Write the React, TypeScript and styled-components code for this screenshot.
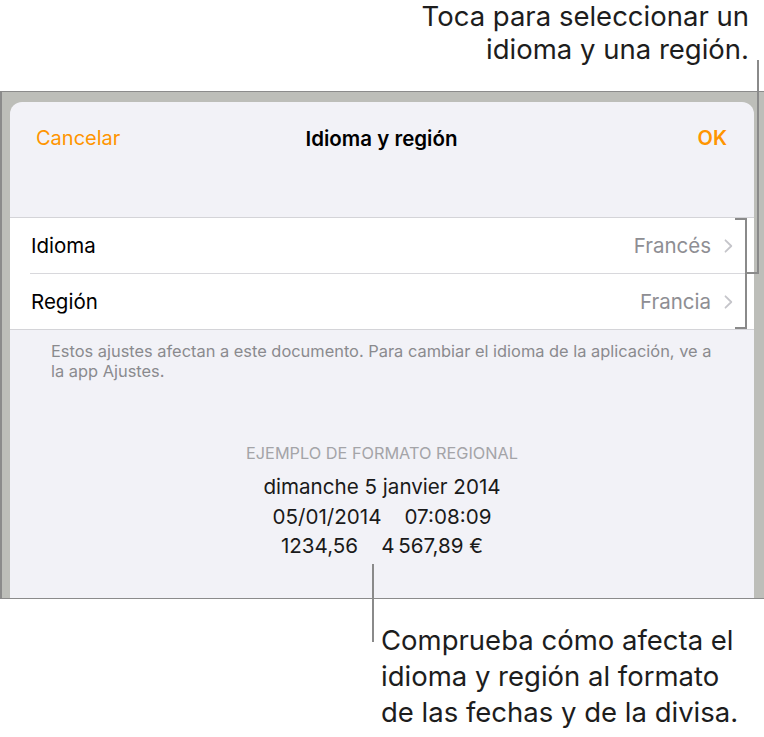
import React from "react";
import styled, { createGlobalStyle } from "styled-components";

const Global = createGlobalStyle`
  html, body { margin: 0; padding: 0; background: #ffffff; }
  body { font-family: Inter, "Noto Sans", sans-serif; -webkit-font-smoothing: antialiased; }
`;

const Page = styled.div`
  position: relative;
  width: 764px;
  height: 737px;
  overflow: hidden;
  background: #ffffff;
  display: flex;
  flex-direction: column;
`;

const Callout = styled.div<{ $align: "left" | "right" }>`
  box-sizing: border-box;
  font-size: 27.5px;
  line-height: 34px;
  color: #1d1d1d;
  text-align: ${(p) => p.$align};
  white-space: nowrap;
`;

const TopCallout = styled(Callout)`
  height: 91px;
  line-height: 33px;
  padding: 0 15px 0 0;
  flex: none;
`;

const BottomCallout = styled(Callout)`
  padding: 23px 0 0 381px;
  line-height: 36px;
`;

const Frame = styled.div`
  box-sizing: border-box;
  height: 508px;
  flex: none;
  display: flex;
  background: #bdbeb9;
  border-top: 1px solid #8b8b8b;
  border-bottom: 1px solid #8b8b8b;
  border-left: 2px solid #8b8b8b;
  padding: 10px 10px 0 8px;
`;

const Sheet = styled.div`
  flex: 1;
  background: #f2f2f7;
  border-radius: 12px 12px 0 0;
  overflow: hidden;
  display: flex;
  flex-direction: column;
`;

const Header = styled.div`
  height: 115px;
  flex: none;
`;

const NavBar = styled.div`
  height: 72px;
  display: grid;
  grid-template-columns: 1fr auto 1fr;
  align-items: center;
  padding: 0 27px 0 26px;
`;

const NavButton = styled.span<{ $side: "left" | "right"; $bold?: boolean }>`
  color: #ff9500;
  font-size: 20px;
  font-weight: ${(p) => (p.$bold ? 600 : 400)};
  justify-self: ${(p) => (p.$side === "left" ? "start" : "end")};
`;

const Title = styled.span`
  font-size: 20.5px;
  font-weight: 600;
  color: #000;
`;

const Table = styled.div`
  background: #ffffff;
  border-top: 1px solid #d4d4d8;
  border-bottom: 1px solid #d4d4d8;
  flex: none;
`;

const Row = styled.div<{ $last?: boolean }>`
  height: 55px;
  display: flex;
  align-items: center;
  margin-left: 20px;
  padding-right: 21px;
  border-bottom: ${(p) => (p.$last ? "none" : "1px solid #d8d8dc")};
`;

const Label = styled.span`
  flex: 1;
  font-size: 20.5px;
  color: #000;
  padding-left: 1px;
`;

const Value = styled.span`
  font-size: 20.5px;
  color: #8e8e93;
  margin-right: 13px;
`;

const Chevron = styled.svg`
  width: 9px;
  height: 14px;
  flex: none;
`;

const Footnote = styled.p`
  margin: 0;
  padding: 11px 40px 0 41px;
  font-size: 16.4px;
  line-height: 20px;
  color: #8a8a8e;
`;

const Example = styled.div`
  margin-top: 61px;
  display: flex;
  flex-direction: column;
  align-items: center;
`;

const ExampleHeading = styled.div`
  font-size: 16.3px;
  line-height: 22px;
  color: #a4a4a8;
  text-transform: uppercase;
  margin-bottom: 8px;
`;

const ExampleLine = styled.div`
  display: flex;
  gap: 23px;
  font-size: 20.6px;
  line-height: 29.5px;
  color: #1a1a1a;
  white-space: pre;
`;

const Leader = styled.div<{ $x: number; $y: number; $w: number; $h: number }>`
  position: absolute;
  left: ${(p) => p.$x}px;
  top: ${(p) => p.$y}px;
  width: ${(p) => p.$w}px;
  height: ${(p) => p.$h}px;
  background: #8a8a8a;
`;

const rows = [
  { label: "Idioma", value: "Francés" },
  { label: "Región", value: "Francia" },
];

const exampleLines = [
  ["dimanche 5 janvier 2014"],
  ["05/01/2014", "07:08:09"],
  ["1234,56", "4\u202F567,89\u00A0€"],
];

export default function App() {
  return (
    <>
      <Global />
      <Page>
        <TopCallout $align="right">
          Toca para seleccionar un
          <br />
          idioma y una región.
        </TopCallout>
        <Frame>
          <Sheet>
            <Header>
              <NavBar>
                <NavButton $side="left">Cancelar</NavButton>
                <Title>Idioma y región</Title>
                <NavButton $side="right" $bold>
                  OK
                </NavButton>
              </NavBar>
            </Header>
            <Table>
              {rows.map((r, i) => (
                <Row key={r.label} $last={i === rows.length - 1}>
                  <Label>{r.label}</Label>
                  <Value>{r.value}</Value>
                  <Chevron viewBox="0 0 9 14">
                    <path d="M1.5 1.3 L7.3 7 L1.5 12.7" fill="none" stroke="#c5c5ca" strokeWidth="1.8" strokeLinecap="round" strokeLinejoin="round" />
                  </Chevron>
                </Row>
              ))}
            </Table>
            <Footnote>
              Estos ajustes afectan a este documento. Para cambiar el idioma de la aplicación, ve a la app Ajustes.
            </Footnote>
            <Example>
              <ExampleHeading>Ejemplo de formato regional</ExampleHeading>
              {exampleLines.map((parts, i) => (
                <ExampleLine key={i}>
                  {parts.map((t) => (
                    <span key={t}>{t}</span>
                  ))}
                </ExampleLine>
              ))}
            </Example>
          </Sheet>
        </Frame>
        <BottomCallout $align="left">
          Comprueba cómo afecta el
          <br />
          idioma y región al formato
          <br />
          de las fechas y de la divisa.
        </BottomCallout>
        <Leader $x={757} $y={60} $w={2} $h={214} />
        <Leader $x={746} $y={272} $w={13} $h={2} />
        <Leader $x={745} $y={218} $w={2} $h={111} />
        <Leader $x={735} $y={218} $w={12} $h={2} />
        <Leader $x={735} $y={327} $w={12} $h={2} />
        <Leader $x={372} $y={564} $w={2} $h={78} />
      </Page>
    </>
  );
}
